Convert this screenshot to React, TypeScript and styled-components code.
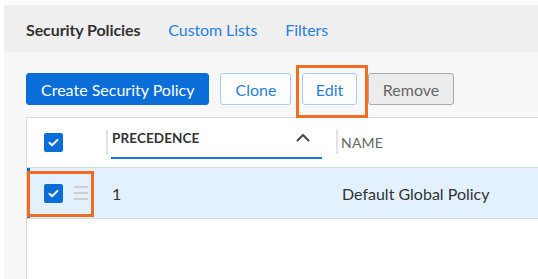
import React from 'react'
import styled, { createGlobalStyle } from 'styled-components'

const GlobalStyle = createGlobalStyle`
  html, body {
    margin: 0;
    padding: 0;
    background: #ffffff;
  }
  body {
    font-family: Lato, 'Open Sans', sans-serif;
    color: #333333;
  }
`

const Page = styled.div`
  padding: 5px 0 0 4px;
  height: 279px;
  box-sizing: border-box;
  overflow: hidden;
`

const Shell = styled.div`
  background: #f8f8f8;
  height: 100%;
  display: flex;
  flex-direction: column;
`

const TabBar = styled.nav`
  height: 47px;
  background: #efefef;
  display: flex;
  align-items: center;
  padding-left: 22px;
  gap: 28px;
  flex-shrink: 0;
`

const Tab = styled.span<{ $active?: boolean }>`
  font-size: 16px;
  font-weight: ${(p) => (p.$active ? 700 : 400)};
  color: ${(p) => (p.$active ? '#333333' : '#2a7de1')};
  letter-spacing: -0.1px;
  margin-top: 1px;
`

const Content = styled.div`
  padding-left: 22px;
  display: flex;
  flex-direction: column;
  flex: 1;
  min-height: 0;
`

const Toolbar = styled.div`
  display: flex;
  align-items: center;
  gap: 11px;
  margin-top: 21px;
`

const Button = styled.button<{ $variant: 'primary' | 'outline' | 'disabled'; $pad?: number }>`
  position: relative;
  height: 32px;
  padding: 0 ${(p) => p.$pad ?? 14}px;
  border-radius: 3px;
  font-family: Lato, 'Open Sans', sans-serif;
  font-size: 16px;
  cursor: pointer;
  border: 1px solid
    ${(p) =>
      p.$variant === 'primary'
        ? '#0b6ed8'
        : p.$variant === 'outline'
          ? '#a9cdf3'
          : '#a9a9a9'};
  background: ${(p) =>
    p.$variant === 'primary'
      ? '#0b6ed8'
      : p.$variant === 'outline'
        ? '#ffffff'
        : '#ececec'};
  color: ${(p) =>
    p.$variant === 'primary'
      ? '#ffffff'
      : p.$variant === 'outline'
        ? '#2a7de1'
        : '#666666'};
`

const Highlight = styled.span<{ $top: number; $bottom: number; $left: number; $right?: number; $width?: number }>`
  position: absolute;
  top: ${(p) => p.$top}px;
  bottom: ${(p) => p.$bottom}px;
  left: ${(p) => p.$left}px;
  ${(p) => (p.$right !== undefined ? `right: ${p.$right}px;` : '')}
  ${(p) => (p.$width !== undefined ? `width: ${p.$width}px;` : '')}
  box-sizing: border-box;
  border: 3px solid #f26d21;
  pointer-events: none;
`

const Table = styled.div`
  margin-top: 12px;
  flex: 1;
  background: #ffffff;
  border-left: 1px solid #dddddd;
  border-top: 1px solid #dddddd;
`

const HeaderRow = styled.div`
  display: grid;
  grid-template-columns: 79px 230px 1fr;
  height: 49px;
`

const HeaderCell = styled.div<{ $divider?: boolean }>`
  position: relative;
  display: flex;
  align-items: flex-start;
  padding-top: 12px;
  ${(p) =>
    p.$divider &&
    `
    &::before {
      content: '';
      position: absolute;
      left: 0;
      top: 12px;
      height: 24px;
      width: 2px;
      background: #e2e2e2;
    }
  `}
`

const CheckCell = styled.div<{ $offset?: number }>`
  display: flex;
  align-items: center;
  padding-left: 17px;
  padding-top: ${(p) => p.$offset ?? 0}px;
  gap: 11px;
`

const SortLabel = styled.div`
  margin-left: 5px;
  width: 211px;
  height: 29px;
  display: flex;
  justify-content: space-between;
  align-items: flex-start;
  border-bottom: 2px solid #1b74e4;
  padding: 0 12px 0 1px;
  box-sizing: border-box;
  font-size: 13.5px;
  font-weight: 700;
  color: #333333;
  letter-spacing: 0.1px;
`

const ColumnLabel = styled.div`
  margin-left: 5px;
  padding-top: 4px;
  font-size: 14px;
  color: #666666;
  letter-spacing: 0.2px;
`

const Row = styled.div<{ $selected?: boolean }>`
  position: relative;
  display: grid;
  grid-template-columns: 79px 230px 1fr;
  height: 50px;
  align-items: center;
  background: ${(p) => (p.$selected ? '#e2f1fd' : '#ffffff')};
  border-top: 1px solid #d5dde3;
  border-bottom: 1px solid #d5dde3;
  box-shadow: ${(p) => (p.$selected ? 'inset 3px 0 0 #0b6ed8' : 'none')};
`

const BodyCell = styled.div`
  padding-left: 6px;
  font-size: 16px;
  color: #333333;
`

const Box = styled.span`
  width: 19px;
  height: 19px;
  border-radius: 2px;
  background: #0b6ed8;
  display: inline-flex;
  align-items: center;
  justify-content: center;
  flex-shrink: 0;
`

const Handle = styled.span`
  display: flex;
  flex-direction: column;
  gap: 4px;
  width: 14px;

  span {
    height: 2px;
    background: #cfcfcf;
  }
`

function Checkbox(): JSX.Element {
  return (
    <Box>
      <svg width="13" height="13" viewBox="0 0 13 13" fill="none">
        <path
          d="M2.5 6.8l2.6 2.5 5.4-5.4"
          stroke="#ffffff"
          strokeWidth="2"
          strokeLinecap="round"
          strokeLinejoin="round"
        />
      </svg>
    </Box>
  )
}

function ChevronUp(): JSX.Element {
  return (
    <svg width="14" height="9" viewBox="0 0 14 9" fill="none" style={{ marginTop: 3 }}>
      <path
        d="M1.5 7.5L7 2l5.5 5.5"
        stroke="#444444"
        strokeWidth="2"
        strokeLinecap="round"
        strokeLinejoin="round"
      />
    </svg>
  )
}

export default function App(): JSX.Element {
  return (
    <React.Fragment>
      <GlobalStyle />
      <Page>
        <Shell>
          <TabBar>
            <Tab $active>Security Policies</Tab>
            <Tab>Custom Lists</Tab>
            <Tab>Filters</Tab>
          </TabBar>
          <Content>
            <Toolbar>
              <Button $variant="primary">Create Security Policy</Button>
              <Button $variant="outline">Clone</Button>
              <Button $variant="outline" $pad={12.5}>
                Edit
                <Highlight $top={-9} $right={-12} $bottom={-14} $left={-7} />
              </Button>
              <Button $variant="disabled">Remove</Button>
            </Toolbar>
            <Table>
              <HeaderRow>
                <HeaderCell>
                  <CheckCell $offset={3}>
                    <Checkbox />
                  </CheckCell>
                </HeaderCell>
                <HeaderCell $divider>
                  <SortLabel>
                    <span>PRECEDENCE</span>
                    <ChevronUp />
                  </SortLabel>
                </HeaderCell>
                <HeaderCell $divider>
                  <ColumnLabel>NAME</ColumnLabel>
                </HeaderCell>
              </HeaderRow>
              <Row $selected>
                <CheckCell>
                  <Checkbox />
                  <Handle>
                    <span />
                    <span />
                    <span />
                  </Handle>
                </CheckCell>
                <BodyCell>1</BodyCell>
                <BodyCell>Default Global Policy</BodyCell>
                <Highlight $top={3} $bottom={1} $left={0} $width={67} />
              </Row>
            </Table>
          </Content>
        </Shell>
      </Page>
    </React.Fragment>
  )
}
